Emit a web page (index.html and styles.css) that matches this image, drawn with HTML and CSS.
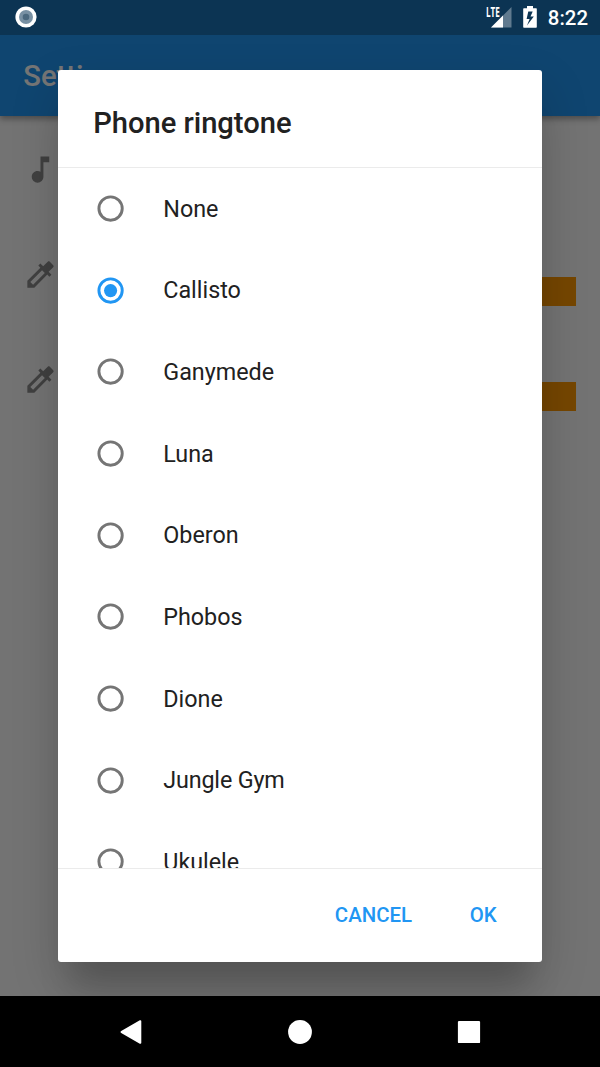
FILE: index.html
```
<!DOCTYPE html>
<html lang="en">
<head>
<meta charset="utf-8">
<title>Settings</title>
<link rel="stylesheet" href="styles.css">
</head>
<body>
<svg class="defs" width="0" height="0">
  <symbol id="radio-off" viewBox="0 0 20 20"><circle cx="10" cy="10" r="8" fill="none" stroke="currentColor" stroke-width="2"/></symbol>
  <symbol id="radio-on" viewBox="0 0 20 20"><circle cx="10" cy="10" r="8" fill="none" stroke="currentColor" stroke-width="2"/><circle cx="10" cy="10" r="4.5" fill="currentColor"/></symbol>
</svg>
<div class="screen">
  <header class="app-bar"><h1>Settings</h1></header>
  <main class="settings">
    <div class="setting">
      <svg class="icon" viewBox="0 0 24 24"><path d="M12 3v10.55c-.59-.34-1.27-.55-2-.55-2.21 0-4 1.79-4 4s1.79 4 4 4 4-1.79 4-4V7h4V3z"/></svg>
    </div>
    <div class="setting">
      <svg class="icon" viewBox="0 0 24 24"><path d="M20.71 5.63l-2.34-2.34c-.39-.39-1.02-.39-1.41 0l-3.12 3.12-1.93-1.91-1.41 1.41 1.42 1.42L3 16.25V21h4.75l8.92-8.92 1.42 1.42 1.41-1.41-1.92-1.92 3.12-3.12c.4-.4.4-1.03.01-1.42zM6.92 19L5 17.08l8.06-8.06 1.92 1.92L6.92 19z"/></svg>
      <span class="swatch"></span>
    </div>
    <div class="setting">
      <svg class="icon" viewBox="0 0 24 24"><path d="M20.71 5.63l-2.34-2.34c-.39-.39-1.02-.39-1.41 0l-3.12 3.12-1.93-1.91-1.41 1.41 1.42 1.42L3 16.25V21h4.75l8.92-8.92 1.42 1.42 1.41-1.41-1.92-1.92 3.12-3.12c.4-.4.4-1.03.01-1.42zM6.92 19L5 17.08l8.06-8.06 1.92 1.92L6.92 19z"/></svg>
      <span class="swatch"></span>
    </div>
  </main>

  <div class="scrim">
    <section class="dialog" role="dialog" aria-labelledby="dialog-title">
      <h2 class="dialog-title" id="dialog-title">Phone ringtone</h2>
      <div class="options">
        <div class="option"><svg class="radio"><use href="#radio-off"/></svg><span>None</span></div>
        <div class="option"><svg class="radio radio-selected"><use href="#radio-on"/></svg><span>Callisto</span></div>
        <div class="option"><svg class="radio"><use href="#radio-off"/></svg><span>Ganymede</span></div>
        <div class="option"><svg class="radio"><use href="#radio-off"/></svg><span>Luna</span></div>
        <div class="option"><svg class="radio"><use href="#radio-off"/></svg><span>Oberon</span></div>
        <div class="option"><svg class="radio"><use href="#radio-off"/></svg><span>Phobos</span></div>
        <div class="option"><svg class="radio"><use href="#radio-off"/></svg><span>Dione</span></div>
        <div class="option"><svg class="radio"><use href="#radio-off"/></svg><span class="tight">Jungle Gym</span></div>
        <div class="option"><svg class="radio"><use href="#radio-off"/></svg><span>Ukulele</span></div>
      </div>
      <div class="actions">
        <button class="action">CANCEL</button>
        <button class="action">OK</button>
      </div>
    </section>
  </div>

  <div class="status-bar">
    <svg class="status-dot" viewBox="0 0 22 22"><circle cx="11" cy="11" r="10.6" fill="#fff"/><circle cx="11" cy="11" r="7" fill="#7890a3"/><circle cx="11" cy="11" r="3.3" fill="#4b687e"/></svg>
    <div class="status-right">
      <div class="signal">
        <span class="lte">LTE</span>
        <svg class="signal-icon" viewBox="0 0 21 21"><path fill="#fff" fill-opacity=".35" d="M20.5 0v20.5H0z"/><path fill="#fff" d="M12 8.5v12H0z"/></svg>
      </div>
      <svg class="battery" viewBox="0 0 14 22"><path fill="#fff" fill-rule="evenodd" d="M4 0h6v2.3h3.2q.6 0 .6.7v18q0 .7-.7.7H.9q-.7 0-.7-.7V3q0-.7.7-.7H4zM5.3 5.5L3.6 13h3L4 19.5l6.8-9H7.5L9.7 5.5z"/></svg>
      <span class="clock">8:22</span>
    </div>
  </div>

  <nav class="nav-bar">
    <svg class="nav-icon" viewBox="0 0 24 24"><path d="M2.2 11.1L20.8.3q1.5-.5 1.5 1v21.4q0 1.5-1.5 1L2.2 12.9q-1.4-.9 0-1.8z"/></svg>
    <svg class="nav-icon" viewBox="0 0 24 24"><circle cx="12" cy="12" r="11.9"/></svg>
    <svg class="nav-icon" viewBox="0 0 24 24"><rect x=".9" y=".9" width="22.2" height="22.2" rx="1.2"/></svg>
  </nav>
</div>
</body>
</html>
```
FILE: styles.css
```
* { box-sizing: border-box; }
body { margin: 0; font-family: Roboto, "Liberation Sans", sans-serif; }
h1, h2 { margin: 0; font-weight: 500; font-size: 29.17px; line-height: 35px; }
.defs { display: block; }
.screen {
  position: relative;
  width: 600px;
  height: 1067px;
  overflow: hidden;
  background: #fafafa;
  display: flex;
  flex-direction: column;
}
.app-bar {
  height: 116.4px;
  padding: 37.6px 23.3px 0;
  display: flex;
  align-items: center;
  background: #2196f3;
  color: #fff;
  box-shadow: 0 3px 6px rgba(0, 0, 0, .35);
}
.settings { flex: 1; }
.setting {
  height: 105px;
  padding: 35.2px 24px 0 23.3px;
  display: flex;
  justify-content: space-between;
  align-items: flex-start;
}
.icon { width: 35px; height: 35px; fill: #8b8b8b; }
.swatch { width: 58px; height: 29px; margin-top: 20.6px; background: #ff9800; }

.scrim {
  position: absolute;
  inset: 0;
  padding: 69.7px 58.4px 105.3px 58px;
  background: rgba(0, 0, 0, .54);
  display: flex;
}
.dialog {
  flex: 1;
  display: flex;
  flex-direction: column;
  border-radius: 3px;
  background: #fff;
  color: #212121;
  box-shadow: 0 42px 32px -14px rgba(0, 0, 0, .15), 0 20px 48px 0 rgba(0, 0, 0, .17);
}
.dialog-title {
  height: 98.3px;
  padding: 10.5px 35.2px 0;
  display: flex;
  align-items: center;
  border-bottom: 1px solid #ebebeb;
  letter-spacing: -.03px;
}
.options { flex: 1; min-height: 0; overflow: hidden; }
.option {
  height: 81.67px;
  padding-left: 38px;
  display: flex;
  align-items: center;
  gap: 38.1px;
  font-size: 23.33px;
}
.tight { letter-spacing: -.15px; }
.radio { width: 29.17px; height: 29.17px; margin-top: -.6px; color: #757575; }
.radio-selected { color: #2196f3; }
.actions {
  height: 93.8px;
  padding-right: 45px;
  border-top: 1px solid #ebebeb;
  display: flex;
  justify-content: flex-end;
  align-items: center;
  gap: 57.6px;
}
.action {
  padding: 0;
  border: 0;
  background: none;
  color: #2196f3;
  font: 500 20.42px Roboto, sans-serif;
}

.status-bar {
  position: absolute;
  inset: 0 0 auto;
  height: 35px;
  padding: 0 12px 1px 15px;
  display: flex;
  justify-content: space-between;
  align-items: center;
  background: #0c3453;
  color: #fff;
}
.status-dot { width: 22px; height: 22px; }
.status-right { display: flex; align-items: center; }
.signal { display: flex; align-items: flex-start; width: 26px; height: 21px; }
.lte {
  width: 5px;
  font: 700 13.5px/11px "Open Sans", sans-serif;
  transform: scaleX(.6);
  transform-origin: 0 0;
}
.signal-icon { width: 21px; height: 21px; }
.battery { width: 14px; height: 22px; margin: 0 10.5px 0 11.5px; }
.clock { font-size: 20.4px; font-weight: 500; padding-top: 2px; }

.nav-bar {
  position: absolute;
  inset: auto 0 0;
  height: 70.6px;
  display: flex;
  justify-content: center;
  align-items: center;
  gap: 145px;
  background: #000;
}
.nav-icon { width: 24px; height: 24px; fill: #fff; }
```
